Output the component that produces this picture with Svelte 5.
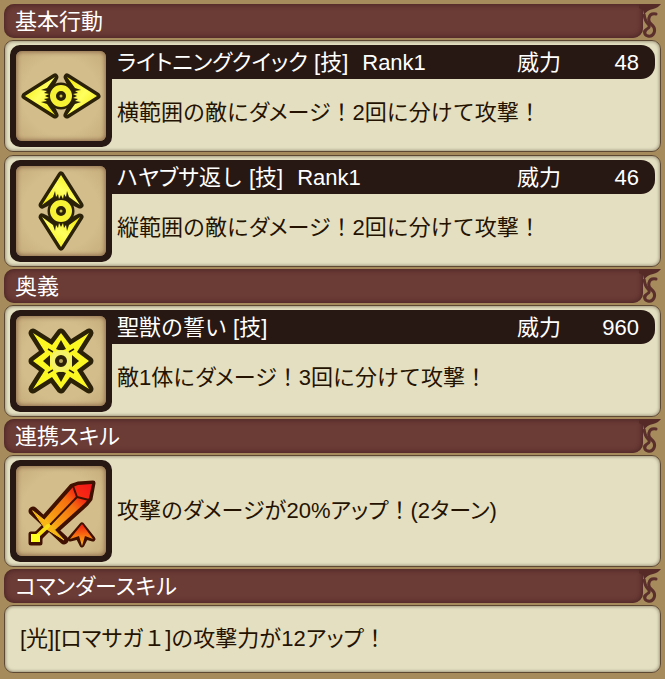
<script>
  const sections = [
    {
      title: '基本行動',
      skills: [
        { icon: 'wide', name: 'ライトニングクイック [技]', rank: 'Rank1', power: 48, text: '横範囲の敵にダメージ！2回に分けて攻撃！' },
        { icon: 'tall', name: 'ハヤブサ返し [技]', rank: 'Rank1', power: 46, text: '縦範囲の敵にダメージ！2回に分けて攻撃！' }
      ]
    },
    {
      title: '奥義',
      skills: [{ icon: 'star', name: '聖獣の誓い [技]', power: 960, text: '敵1体にダメージ！3回に分けて攻撃！' }]
    },
    {
      title: '連携スキル',
      skills: [{ icon: 'sword', text: '攻撃のダメージが20%アップ！(2ターン)' }]
    },
    {
      title: 'コマンダースキル',
      skills: [{ text: '[光][ロマサガ１]の攻撃力が12アップ！' }]
    }
  ];

  // Odd entries are the katakana runs, which are set proportionally.
  const runs = (text) => text.split(/([ァ-ヶー]+)/);
</script>

{#snippet jp(text)}{#each runs(text) as run, i}{#if i % 2}<span class="kana">{run}</span>{:else}{run}{/if}{/each}{/snippet}

{#snippet eye()}
  <g stroke-linejoin="round">
    <g fill="#2b2108" stroke="#2b2108" stroke-width="7">
      <path d="M9 45 L39 26 L33 38 L33 52 L39 64 Z" />
      <path d="M81 45 L51 26 L57 38 L57 52 L51 64 Z" />
      <circle cx="45" cy="45" r="10" />
    </g>
    <g fill="url(#gold)">
      <path d="M9 45 L39 26 L31 37 L25 39 L31 40 L28 42 L33 43 L29 45 L33 47 L28 48 L31 50 L25 51 L31 53 L39 64 Z" />
      <path d="M81 45 L51 26 L59 37 L65 39 L59 40 L62 42 L57 43 L61 45 L57 47 L62 48 L59 50 L65 51 L59 53 L51 64 Z" />
    </g>
    <circle cx="45" cy="45" r="8" fill="#2b2108" stroke="#f7f233" stroke-width="6" />
    <circle cx="45" cy="45" r="1.5" fill="#c8be45" />
  </g>
{/snippet}

<main>
  {#each sections as section}
    <section>
      <header>
        <h2>{@render jp(section.title)}</h2>
        <svg class="flourish" viewBox="0 0 22 34" aria-hidden="true">
          <path d="M0 0 H22 Q19 4 14 5 Q8 6 5 11 L4 6 L0 4 Z" fill="#552a27" />
          <path d="M17 10 Q11 9 10 14 Q9 17 12 20 Q17 24 15 29 Q13 33 9 32 Q5 31 6 27" fill="none" stroke="#5b2f2b" stroke-width="3" stroke-linecap="round" />
          <path d="M5 10 Q6 17 9 20 Q12 23 8 25 Q5 27 6 29" fill="none" stroke="#5b2f2b" stroke-width="3" />
        </svg>
      </header>
      {#each section.skills as skill}
        <article class:plain={!skill.icon} class:named={skill.name}>
          {#if skill.icon}
            <div class="frame">
              <svg viewBox="0 0 90 90" aria-hidden="true">
                <defs>
                  <linearGradient id="gold" x1="0" x2="1" y1="0" y2="1">
                    <stop offset="0" stop-color="#f2e900" /><stop offset=".5" stop-color="#ffff60" /><stop offset="1" stop-color="#f2e900" />
                  </linearGradient>
                  <linearGradient id="fire" gradientUnits="userSpaceOnUse" x1="75" x2="16" y1="18" y2="76">
                    <stop offset="0" stop-color="#f5151a" /><stop offset=".2" stop-color="#f52c12" /><stop offset=".35" stop-color="#f5700f" /><stop offset=".65" stop-color="#f9a316" /><stop offset=".85" stop-color="#fbe416" /><stop offset="1" stop-color="#ffff20" />
                  </linearGradient>
                  <linearGradient id="arrow" x1="0" x2="0" y1="0" y2="1">
                    <stop offset="0" stop-color="#f01b0c" /><stop offset="1" stop-color="#ffc018" />
                  </linearGradient>
                </defs>
                {#if skill.icon === 'wide'}
                  {@render eye()}
                {:else if skill.icon === 'tall'}
                  <g transform="rotate(90 45 45)">{@render eye()}</g>
                {:else if skill.icon === 'star'}
                  <g stroke-linejoin="round">
                    <path d="M17 17 L36 29 L45 17 L54 29 L73 17 L61 36 L73 45 L61 54 L73 73 L54 61 L45 73 L36 61 L17 73 L29 54 L17 45 L29 36 Z" fill="#2b2108" stroke="#2b2108" stroke-width="9" />
                    <path d="M17 17 L36 29 L45 17 L54 29 L73 17 L61 36 L73 45 L61 54 L73 73 L54 61 L45 73 L36 61 L17 73 L29 54 L17 45 L29 36 Z" fill="#fbf722" />
                    <path d="M45 24 L50 33 L45 35 L40 33 Z M45 66 L50 57 L45 55 L40 57 Z M27 45 L34 39 L34 51 Z M63 45 L56 39 L56 51 Z" fill="#2b2108" />
                    <path d="M32 33 L37 36 M58 33 L53 36 M32 57 L37 54 M58 57 L53 54" stroke="#2b2108" stroke-width="1.5" />
                    <circle cx="45" cy="45" r="8.500" fill="#2b2108" stroke="#f4f266" stroke-width="5" />
                    <circle cx="45" cy="45" r="2" fill="#b5a45b" />
                  </g>
                {:else}
                  <g stroke-linejoin="round" stroke-linecap="round">
                    <g fill="#401000" stroke="#401000" stroke-width="5">
                      <path d="M77 17 L74 33 L70 38 L39 66 L26 54 L56 20 L62 18 Z" />
                      <path d="M32 60 L20 72" stroke-width="10" />
                      <path d="M15 68 H24 V77 H15 Z" stroke-width="5" />
                      <path d="M17 45 L48 74" stroke-width="9" />
                    </g>
                    <path d="M76 18 L73 32 L69 37 L39 64 L28 54 L57 21 L62 19 Z" fill="url(#fire)" />
                    <path d="M57 20 L61 31 L73 34 M61 31 L34 59" fill="none" stroke="#401000" stroke-width="2" />
                    <path d="M17 45 L33 58 L48 74 L29 62 Z" fill="#fbb516" stroke="#fbc516" stroke-width="1" />
                    <path d="M32 60 L20 71" stroke="#f9df16" stroke-width="4" />
                    <path d="M15 68 H24 V76 H15 Z" fill="#ffff20" />
                    <path d="M66 59 L77 73 L70 71 L66 79 L62 71 L54 73 Z" fill="#401000" stroke="#401000" stroke-width="5" />
                    <path d="M66 58 L77 73 L69 70 L66 80 L63 70 L54 73 Z" fill="url(#arrow)" />
                  </g>
                {/if}
              </svg>
            </div>
          {/if}
          <div class="body">
            {#if skill.name}
              <div class="bar">
                <h3>{@render jp(skill.name)}</h3>
                {#if skill.rank}<span class="rank">{skill.rank}</span>{/if}
                <span class="label">威力</span>
                <span class="power">{skill.power}</span>
              </div>
            {/if}
            <p><span>{@render jp(skill.text)}</span></p>
          </div>
        </article>
      {/each}
    </section>
  {/each}
</main>

<style>
  :global(body) {
    background: #a68b5d;
  }
  main {
    display: flex;
    flex-direction: column;
    gap: 2px;
    padding: 4px 4px 6px;
    color: #241300;
    font: 22px/36px "Liberation Sans", "Noto Sans CJK JP", sans-serif;
  }
  section {
    display: flex;
    flex-direction: column;
    gap: 2px;
  }
  h2, h3, p {
    margin: 0;
    font-size: inherit;
    font-weight: 400;
  }
  .kana {
    font-feature-settings: "palt";
  }
  header {
    display: flex;
    height: 34px;
    color: #fff;
  }
  h2 {
    flex: 1;
    padding-left: 11px;
    border-radius: 10px 0 10px 10px;
    background: #6b3b36;
    box-shadow: inset 0 0 5px 1px #4a2424;
  }
  .flourish {
    width: 22px;
    height: 34px;
    margin-left: -4px;
  }
  article {
    display: flex;
    height: 112px;
    box-sizing: border-box;
    padding: 4px 5px;
    border: 1px solid #5d4933;
    border-radius: 9px;
    background: #e4dfc1;
    box-shadow: inset 0 0 3px 1px #a39a80;
  }
  article + article {
    margin-top: 1px;
  }
  .frame {
    flex: none;
    width: 90px;
    height: 90px;
    border: 6px solid #281813;
    border-radius: 10px;
    background: #281813;
  }
  .named .frame {
    border-top-right-radius: 0;
  }
  .frame svg {
    display: block;
    border-radius: 6px;
    background: radial-gradient(#d2bd8b 60%, #c6ab79);
    box-shadow: inset 0 0 4px 1px #8b6a4b;
  }
  .body {
    display: flex;
    flex: 1;
    flex-direction: column;
    min-width: 0;
  }
  .bar {
    display: flex;
    height: 34px;
    padding: 0 16px 0 5px;
    border-radius: 0 14px 14px 0;
    background: #281813;
    color: #fff;
    white-space: pre;
  }
  .rank {
    margin-left: 14px;
  }
  .label {
    margin-left: auto;
  }
  .power {
    width: 78px;
    text-align: right;
  }
  p {
    display: flex;
    flex: 1;
    align-items: center;
    padding-left: 5px;
    white-space: nowrap;
  }
  .plain {
    height: 68px;
    padding-left: 10px;
  }
</style>
